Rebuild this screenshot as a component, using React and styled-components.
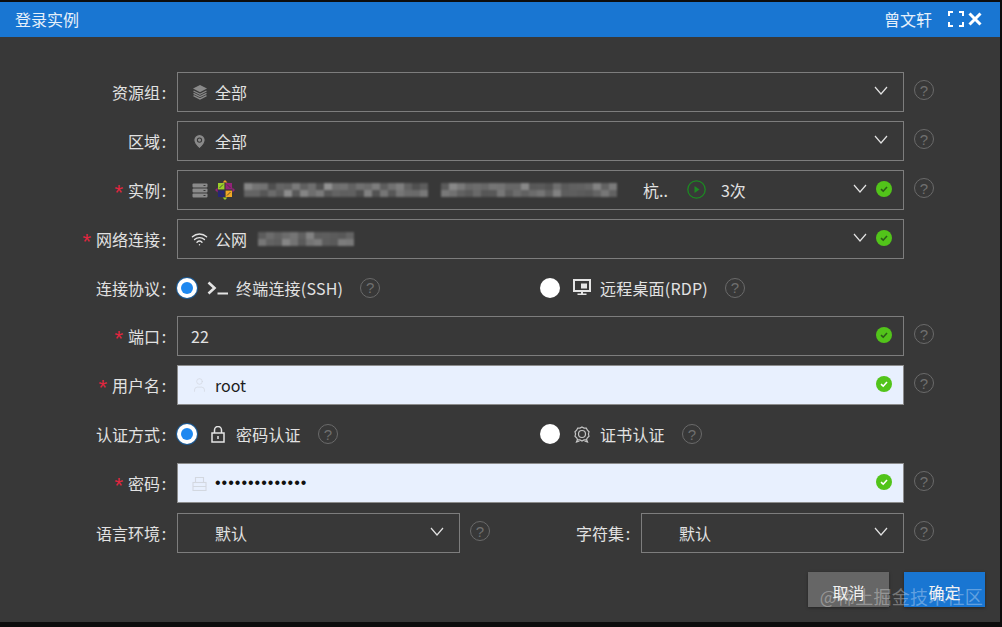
import React from 'react';
import styled, { createGlobalStyle } from 'styled-components';
import { MapPin, User, Wifi } from 'lucide-react';

const GlobalStyle = createGlobalStyle`
  html, body {
    margin: 0;
    padding: 0;
    background: #0d0d0d;
  }
  body {
    font-family: "Noto Sans CJK SC", "Noto Sans", "Liberation Sans", sans-serif;
  }
`;

const Page = styled.div`
  width: 1002px;
  height: 627px;
  padding-top: 2px;
  box-sizing: border-box;
  overflow: hidden;
  background: #0d0d0d;
`;

const Dialog = styled.div`
  position: relative;
  width: 1000px;
  height: 620px;
  background: #383838;
  color: #e2e2e2;
  font-size: 16px;
  line-height: 24px;
`;

const Header = styled.header`
  display: flex;
  align-items: center;
  box-sizing: border-box;
  height: 35px;
  padding: 0 18px 2px 15px;
  background: #1976d2;
  color: #e6f0fa;
`;

const Title = styled.div`
  flex: 1;
`;

const UserName = styled.div`
  margin-right: 16px;
`;

const HeaderIcon = styled.svg`
  display: block;
  color: #fff;
  margin-left: ${p => p.$gap || 0}px;
`;

const Form = styled.div`
  display: flex;
  flex-direction: column;
  padding-top: 35px;
`;

const Row = styled.div`
  display: flex;
  align-items: center;
  height: ${p => p.$height || 40}px;
  margin-bottom: 9px;
  margin-top: ${p => p.$top || 0}px;
`;

const Label = styled.label`
  flex: none;
  width: 168px;
  margin-right: 9px;
  text-align: right;
  white-space: nowrap;
`;

const CompactLabel = styled(Label)`
  width: ${p => p.$width}px;
`;

const Star = styled.span`
  display: inline-block;
  margin-right: 5px;
  height: 0;
  color: #e0263f;
  font-family: "Liberation Sans", sans-serif;
  font-size: 22px;
  line-height: 0;
  vertical-align: -3px;
`;

const Colon = styled.span`
  display: inline-block;
  width: 8px;
  text-align: center;
`;

const Field = styled.div`
  display: flex;
  align-items: center;
  flex: none;
  box-sizing: border-box;
  width: ${p => p.$width || 727}px;
  height: 40px;
  padding: 0 15px 0 13px;
  border: 1px solid ${p => (p.$filled ? '#8c8c8c' : '#7d7d7d')};
  background: ${p => (p.$filled ? '#e8f0fe' : 'transparent')};
  color: ${p => (p.$filled ? '#1d1d1d' : '#e2e2e2')};
`;

const IconSlot = styled.span`
  display: flex;
  align-items: center;
  justify-content: center;
  flex: none;
  width: 17px;
  height: 24px;
  margin-right: 7px;
  color: ${p => p.$color || '#8a8a8a'};
`;

const Value = styled.span`
  white-space: nowrap;
`;

const OptionText = styled(Value)`
  letter-spacing: 0.2px;
`;

const Dots = styled.span`
  font-family: "Liberation Sans", sans-serif;
  letter-spacing: 1px;
  color: #111;
`;

const Spacer = styled.span`
  flex: 1;
`;

const ChevronIcon = styled.svg`
  display: block;
  flex: none;
  margin-bottom: 3px;
  color: #e2e2e2;
`;

const CheckDot = styled.span`
  display: flex;
  align-items: center;
  justify-content: center;
  flex: none;
  width: 16px;
  height: 16px;
  margin-left: ${p => p.$gap || 0}px;
  margin-right: -4px;
  margin-bottom: 2px;
  border-radius: 50%;
  background: #52c41a;
  color: ${p => (p.$light ? '#fff' : '#2b5c18')};
`;

const HelpMark = styled.span`
  display: flex;
  align-items: center;
  justify-content: center;
  flex: none;
  box-sizing: border-box;
  width: 20px;
  height: 20px;
  margin-left: ${p => p.$gap}px;
  margin-bottom: ${p => p.$lift || 0}px;
  border: 1.5px solid #6a6a6a;
  border-radius: 50%;
  color: #6f6f6f;
  font-family: "Liberation Sans", sans-serif;
  font-size: 15px;
  line-height: 1;
`;

const RadioOption = styled.div`
  display: flex;
  align-items: center;
  flex: none;
  width: 363px;
`;

const Radio = styled.span`
  display: flex;
  align-items: center;
  justify-content: center;
  flex: none;
  box-sizing: border-box;
  width: 20px;
  height: 20px;
  margin-right: ${p => p.$gap}px;
  border-radius: 50%;
  background: #fff;
  box-shadow: ${p => (p.$checked ? '0 0 0 1px #1c5a94' : 'none')};

  &::after {
    content: "";
    display: ${p => (p.$checked ? 'block' : 'none')};
    width: 12px;
    height: 12px;
    border-radius: 50%;
    background: #1e88f0;
  }
`;

const OptionIcon = styled.span`
  display: flex;
  align-items: center;
  justify-content: center;
  flex: none;
  width: 22px;
  margin-right: ${p => p.$gap}px;
  color: #e4e4e4;
`;

const CertWrap = styled(OptionIcon)`
  color: #c4c4c4;
`;

const MosaicBlock = styled.span`
  display: grid;
  grid-template-columns: repeat(auto-fill, 8px);
  grid-auto-rows: 7px;
  flex: none;
  width: ${p => p.$width}px;
  height: 14px;
  margin-left: ${p => p.$gap || 0}px;
  filter: blur(1.3px);
`;

const Place = styled(Value)`
  margin-left: 22px;
`;

const PlayIcon = styled.svg`
  display: block;
  flex: none;
  margin-left: 19px;
  margin-right: 15px;
  margin-bottom: 2px;
`;

const Footer = styled.div`
  display: flex;
  justify-content: flex-end;
  gap: 15px;
  margin-top: 10px;
  padding-right: 15px;
`;

const Button = styled.button`
  width: 81px;
  height: 35px;
  padding: 4px 0 0;
  border: none;
  background: ${p => (p.$primary ? '#1976d2' : '#666666')};
  color: #f2f2f2;
  font-family: inherit;
  font-size: 16px;
  box-shadow: 0 1px 3px rgba(0, 0, 0, 0.35);
`;

const Watermark = styled.div`
  position: absolute;
  right: 17px;
  bottom: 14px;
  color: rgba(255, 255, 255, 0.32);
  font-size: 18px;
  letter-spacing: 0.25px;
  line-height: 24px;
  white-space: nowrap;
  pointer-events: none;
`;

const Mosaic = ({ width, gap, seed = 7 }) => {
  const count = Math.floor(width / 8) * 2;
  const cells = [];
  let n = seed;
  for (let i = 0; i < count; i++) {
    n = (n * 73 + 41) % 101;
    const base = i % 2 === 0 ? 88 : 78;
    cells.push(base + (n % 62));
  }
  return (
    <MosaicBlock $width={width} $gap={gap}>
      {cells.map((shade, i) => (
        <span key={i} style={{ background: `rgb(${shade},${shade},${shade})` }} />
      ))}
    </MosaicBlock>
  );
};

const Help = ({ gap = 10, lift = 4 }) => <HelpMark $gap={gap} $lift={lift}>?</HelpMark>;

const Check = ({ gap, light }) => (
  <CheckDot $gap={gap} $light={light}>
    <svg width="10" height="10" viewBox="0 0 10 10" fill="none" stroke="currentColor" strokeWidth="1.6">
      <path d="M2 5.2 4.2 7.2 8 3" />
    </svg>
  </CheckDot>
);

const FieldLabel = ({ required, children, width }) => {
  const Tag = width ? CompactLabel : Label;
  return (
    <Tag $width={width}>
      {required && <Star>*</Star>}
      {children}
      <Colon>:</Colon>
    </Tag>
  );
};

const Arrow = () => (
  <ChevronIcon width="14" height="9" viewBox="0 0 14 9" fill="none" stroke="currentColor" strokeWidth="1.2">
    <path d="M1 1 7 8 13 1" />
  </ChevronIcon>
);

const LayersIcon = () => (
  <svg width="16" height="16" viewBox="0 0 16 16" fill="none">
    <path d="M8 1 15 4.600 8 8.200 1 4.600Z" fill="#8a8a8a" />
    <path d="M1.500 7 8 10.300 14.500 7M1.500 9.300 8 12.600 14.500 9.300M1.500 11.600 8 14.900 14.500 11.600" stroke="#8a8a8a" strokeWidth="1.300" />
  </svg>
);

const ServerIcon = () => (
  <svg width="16" height="15" viewBox="0 0 16 15" fill="#8a8a8a">
    <rect x="0.5" y="0.5" width="15" height="4" rx="1" />
    <rect x="0.5" y="5.5" width="15" height="4" rx="1" />
    <rect x="0.5" y="10.5" width="15" height="4" rx="1" />
    <path d="M11.500 2h2v1h-2zM11.500 7h2v1h-2zM11.500 12h2v1h-2z" fill="#383838" />
  </svg>
);

const CentosLogo = () => (
  <svg width="20" height="20" viewBox="0 0 20 20">
    <path d="M3 3h6.400v6.400H3z" fill="#9ccd2a" />
    <path d="M10.600 3H17v6.400h-6.400z" fill="#932279" />
    <path d="M3 10.600h6.400V17H3z" fill="#262577" />
    <path d="M10.600 10.600H17V17h-6.400z" fill="#efa724" />
    <path d="M10 0 12.400 2.600H7.600Z" fill="#efa724" />
    <path d="M20 10 17.400 12.400V7.600Z" fill="#932279" />
    <path d="M10 20 7.600 17.400H12.400Z" fill="#9ccd2a" />
    <path d="M0 10 2.600 7.600V12.400Z" fill="#932279" />
    <path d="M4.500 8 8 4.500M12 4.500 15.500 8M4.500 12 8 15.500M12 15.500 15.500 12" stroke="#383838" strokeWidth="0.8" />
  </svg>
);

const TerminalIcon = () => (
  <svg width="22" height="14" viewBox="0 0 22 14" fill="none" stroke="currentColor">
    <path d="M1.500 1.500 7.500 7 1.500 12.500" strokeWidth="2.600" />
    <path d="M10.500 12.500H21" strokeWidth="2" />
  </svg>
);

const DesktopIcon = () => (
  <svg width="18" height="17" viewBox="0 0 18 17" fill="none">
    <path d="M1 1h16v11H1z" stroke="currentColor" strokeWidth="2" />
    <path d="M8 4.500h6v5H8z" fill="currentColor" />
    <path d="M8 12h2v3H8zM4.500 14.500h9V16h-9z" fill="currentColor" />
  </svg>
);

const CertIcon = () => (
  <svg width="16" height="17" viewBox="0 0 16 17" fill="none" stroke="currentColor" strokeWidth="1.200">
    <path d="M8 1 10 2.100 12.300 2.200 13.400 4.200 15 5.800 14.400 8 15 10.200 13.400 11.800 12.300 13.800 10 13.900 8 15 6 13.900 3.700 13.800 2.600 11.800 1 10.200 1.600 8 1 5.800 2.600 4.200 3.700 2.200 6 2.100Z" />
    <circle cx="8" cy="8" r="3.500" />
    <path d="M3.500 13.500 2.500 16 5.500 15M12.500 13.500 13.500 16 10.500 15" />
  </svg>
);

const PadlockIcon = () => (
  <svg width="14" height="17" viewBox="0 0 14 17" fill="none" stroke="currentColor" strokeWidth="1.500">
    <rect x="1" y="7" width="12" height="9" />
    <path d="M3.500 7V4a3.500 3.500 0 0 1 7 0v3" />
    <path d="M7 10v3" />
  </svg>
);

const FaintLockIcon = () => (
  <svg width="15" height="15" viewBox="0 0 15 15" fill="none" stroke="#d3d8e0" strokeWidth="1.100">
    <rect x="1" y="6.500" width="13" height="8" />
    <path d="M3.500 6.500V1.500h8v5M1 10.500h13" />
  </svg>
);

const App = () => {
  return (
    <Page>
      <GlobalStyle />
      <Dialog>
        <Header>
          <Title>登录实例</Title>
          <UserName>曾文轩</UserName>
          <HeaderIcon width="16" height="16" viewBox="0 0 16 16" fill="none" stroke="currentColor" strokeWidth="2">
            <path d="M1 5V1h4M11 1h4v4M15 11v4h-4M5 15H1v-4" />
          </HeaderIcon>
          <HeaderIcon $gap={4} width="14" height="14" viewBox="0 0 14 14" fill="none" stroke="currentColor" strokeWidth="3">
            <path d="M1.500 1.500 12.500 12.500M12.500 1.500 1.500 12.500" />
          </HeaderIcon>
        </Header>
        <Form>
          <Row>
            <FieldLabel>资源组</FieldLabel>
            <Field>
              <IconSlot><LayersIcon /></IconSlot>
              <Value>全部</Value>
              <Spacer />
              <Arrow />
            </Field>
            <Help />
          </Row>
          <Row>
            <FieldLabel>区域</FieldLabel>
            <Field>
              <IconSlot><MapPin size={19} fill="#8a8a8a" strokeWidth={1.500} color="#383838" /></IconSlot>
              <Value>全部</Value>
              <Spacer />
              <Arrow />
            </Field>
            <Help />
          </Row>
          <Row>
            <FieldLabel required>实例</FieldLabel>
            <Field>
              <IconSlot><ServerIcon /></IconSlot>
              <CentosLogo />
              <Mosaic width={186} gap={9} seed={7} />
              <Mosaic width={180} gap={11} seed={23} />
              <Place>杭..</Place>
              <PlayIcon width="19" height="19" viewBox="0 0 19 19" fill="none">
                <circle cx="9.500" cy="9.500" r="8.700" stroke="#1c8a22" strokeWidth="1.300" />
                <path d="M7.500 6 12.500 9.500 7.500 13Z" fill="#1c8a22" />
              </PlayIcon>
              <Value>3次</Value>
              <Spacer />
              <Arrow />
              <Check gap={9} />
            </Field>
            <Help />
          </Row>
          <Row>
            <FieldLabel required>网络连接</FieldLabel>
            <Field>
              <IconSlot $color="#e2e2e2"><Wifi size={20} strokeWidth={2} /></IconSlot>
              <Value>公网</Value>
              <Mosaic width={102} gap={11} seed={41} />
              <Spacer />
              <Arrow />
              <Check gap={9} />
            </Field>
          </Row>
          <Row $height={39}>
            <FieldLabel>连接协议</FieldLabel>
            <RadioOption>
              <Radio $checked $gap={10} />
              <OptionIcon $gap={7}><TerminalIcon /></OptionIcon>
              <OptionText>终端连接(SSH)</OptionText>
              <Help gap={17} lift={0} />
            </RadioOption>
            <RadioOption>
              <Radio $gap={11} />
              <OptionIcon $gap={7}><DesktopIcon /></OptionIcon>
              <OptionText>远程桌面(RDP)</OptionText>
              <Help gap={17} lift={0} />
            </RadioOption>
          </Row>
          <Row>
            <FieldLabel required>端口</FieldLabel>
            <Field>
              <Value>22</Value>
              <Spacer />
              <Check />
            </Field>
            <Help />
          </Row>
          <Row>
            <FieldLabel required>用户名</FieldLabel>
            <Field $filled>
              <IconSlot $color="#d3d8e0"><User size={20} strokeWidth={1} /></IconSlot>
              <Value>root</Value>
              <Spacer />
              <Check light />
            </Field>
            <Help />
          </Row>
          <Row>
            <FieldLabel>认证方式</FieldLabel>
            <RadioOption>
              <Radio $checked $gap={10} />
              <OptionIcon $gap={7}><PadlockIcon /></OptionIcon>
              <OptionText>密码认证</OptionText>
              <Help gap={17} lift={0} />
            </RadioOption>
            <RadioOption>
              <Radio $gap={11} />
              <CertWrap $gap={7}><CertIcon /></CertWrap>
              <OptionText>证书认证</OptionText>
              <Help gap={17} lift={0} />
            </RadioOption>
          </Row>
          <Row>
            <FieldLabel required>密码</FieldLabel>
            <Field $filled>
              <IconSlot><FaintLockIcon /></IconSlot>
              <Dots>••••••••••••••</Dots>
              <Spacer />
              <Check light />
            </Field>
            <Help />
          </Row>
          <Row $top={1}>
            <FieldLabel>语言环境</FieldLabel>
            <Field $width={283}>
              <IconSlot />
              <Value>默认</Value>
              <Spacer />
              <Arrow />
            </Field>
            <Help />
            <FieldLabel width={142}>字符集</FieldLabel>
            <Field $width={263}>
              <IconSlot />
              <Value>默认</Value>
              <Spacer />
              <Arrow />
            </Field>
            <Help />
          </Row>
          <Footer>
            <Button>取消</Button>
            <Button $primary>确定</Button>
          </Footer>
        </Form>
        <Watermark>@稀土掘金技术社区</Watermark>
      </Dialog>
    </Page>
  );
};

export default App;
